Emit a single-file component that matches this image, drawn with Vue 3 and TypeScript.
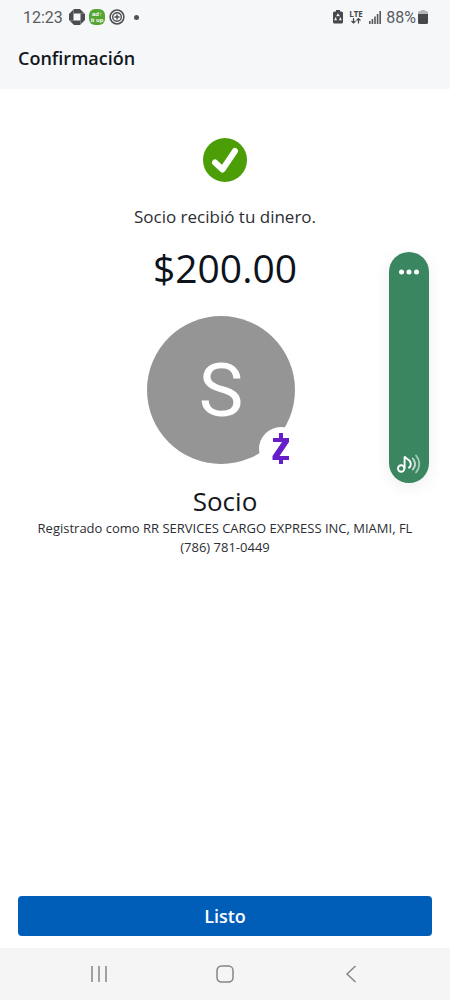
<script setup lang="ts">
interface Payment {
  recipient: string
  amount: string
  registeredAs: string
  phone: string
}

const payment: Payment = {
  recipient: 'Socio',
  amount: '$200.00',
  registeredAs: 'RR SERVICES CARGO EXPRESS INC, MIAMI, FL',
  phone: '(786) 781-0449',
}
</script>

<template>
  <div class="screen">
    <header class="top">
      <div class="status">
        <div class="status-group">
          <span class="clock">12:23</span>
          <svg class="app-icon" viewBox="0 0 16 16" aria-hidden="true">
            <path d="M5 0h6l5 5v6l-5 5H5l-5-5V5z" fill="#4b4d50" />
            <path d="M4.500 4.500h7v7h-7z" fill="#f5f7f9" />
            <path d="M4.500 0v4.500M16 4.500h-4.500M11.500 16v-4.500M0 11.500h4.500" stroke="#a5a7a9" stroke-width="0.500" />
          </svg>
          <svg class="app-icon" viewBox="0 0 16 16" aria-hidden="true">
            <rect width="16" height="16" rx="6" fill="#55a532" />
            <text x="8" y="7" class="mini">ad↑</text>
            <text x="8" y="13" class="mini">it up</text>
          </svg>
          <svg class="app-icon" viewBox="0 0 16 16" fill="none" stroke="#4b4d50" aria-hidden="true">
            <circle cx="8" cy="8" r="6.900" stroke-width="1.500" />
            <circle cx="8" cy="8" r="4.300" stroke-width="1.400" />
            <path d="M8 5.500v5M5.500 8h5" stroke-width="1.400" />
          </svg>
          <span class="dot"></span>
        </div>
        <div class="status-group right">
          <svg width="10" height="15" viewBox="0 0 10 15" aria-hidden="true">
            <path d="M3 0h4v1.500h1.500q1.500 0 1.500 1.500v9q0 1.500-1.500 1.500h-7Q0 13.500 0 12V3q0-1.500 1.500-1.500H3z" fill="#46484b" />
            <path d="M3.700 6.200L5 4.300l1.300 1.900M7 7.500l1 2.200H6M4 9.800H2l1-2.300" fill="none" stroke="#f5f7f9" stroke-width="1.100" />
          </svg>
          <svg width="16" height="18" viewBox="0 0 16 18" aria-hidden="true">
            <text x="8" y="9" class="lte">LTE</text>
            <path d="M5.500 10v5M3.500 13l2 2 2-2M10.500 15.500v-5M8.500 12.500l2-2 2 2" fill="none" stroke="#46484b" stroke-width="1.200" />
          </svg>
          <svg width="12" height="13" viewBox="0 0 12 13" fill="#55585b" aria-hidden="true">
            <path d="M0 10h1.600v3H0zM2.600 8h1.600v5H2.600zM5.200 5.500h1.600V13H5.200zM7.800 3h1.600v10H7.800zM10.400 0H12v13h-1.600z" />
          </svg>
          <span class="percent">88%</span>
          <svg width="10" height="14" viewBox="0 0 10 14" aria-hidden="true">
            <path d="M3 0h4v1h1.500Q10 1 10 2.500V5H0V2.500Q0 1 1.500 1H3z" fill="#b4b6b8" />
            <path d="M0 4h10v8.500q0 1.500-1.500 1.500h-7Q0 14 0 12.500z" fill="#46484b" />
          </svg>
        </div>
      </div>
      <h1 class="title">Confirmación</h1>
    </header>

    <main class="content">
      <svg class="check" viewBox="0 0 44 44" role="img" aria-label="Completado">
        <circle cx="22" cy="22" r="22" fill="#4b9e06" />
        <path d="M12 24.500l7.500 7L32 13" fill="none" stroke="#fff" stroke-width="6" stroke-linecap="round" stroke-linejoin="round" />
      </svg>
      <p class="message">{{ payment.recipient }} recibió tu dinero.</p>
      <p class="amount">{{ payment.amount }}</p>
      <div class="avatar-wrap">
        <div class="avatar">{{ payment.recipient.charAt(0) }}</div>
        <div class="badge">
          <svg width="18" height="32" viewBox="0 0 18 32" role="img" aria-label="Zelle">
            <path d="M7 0h4v5h6v4L7.500 23H17v4h-6v4H7v-4H.5v-4L10 9H1V5h6z" fill="#651ec8" />
          </svg>
        </div>
      </div>
      <h2 class="name">{{ payment.recipient }}</h2>
      <p class="detail">Registrado como {{ payment.registeredAs }}</p>
      <p class="detail">{{ payment.phone }}</p>
    </main>

    <div class="action">
      <button type="button" class="done">Listo</button>
    </div>

    <nav class="system-nav">
      <button type="button" aria-label="Recientes">
        <svg width="18" height="18" viewBox="0 0 18 18" fill="none" stroke="#858585" stroke-width="1.500">
          <path d="M2 1v16M9 1v16M16 1v16" />
        </svg>
      </button>
      <button type="button" aria-label="Inicio">
        <svg width="18" height="18" viewBox="0 0 18 18" fill="none" stroke="#858585" stroke-width="1.500">
          <rect x="1" y="1" width="16" height="16" rx="4.500" />
        </svg>
      </button>
      <button type="button" aria-label="Atrás">
        <svg width="18" height="18" viewBox="0 0 18 18" fill="none" stroke="#858585" stroke-width="1.500">
          <path d="M13.500 1L5 9l8.500 8" />
        </svg>
      </button>
    </nav>

    <div class="volume">
      <button type="button" aria-label="Más opciones">
        <svg width="20" height="6" viewBox="0 0 20 6" fill="#fff">
          <circle cx="2.500" cy="3" r="2.500" />
          <circle cx="10" cy="3" r="2.500" />
          <circle cx="17.500" cy="3" r="2.500" />
        </svg>
      </button>
      <button type="button" aria-label="Sonido multimedia">
        <svg width="24" height="20" viewBox="0 0 24 20" fill="none" stroke="#fff" stroke-linecap="round">
          <circle cx="4.200" cy="14.500" r="3.200" stroke-width="1.900" />
          <path d="M7.600 14V2.500C9 5.500 13.800 5 13.800 10c0 1.700-.7 3-1.800 3.800" stroke-width="1.900" />
          <path d="M15.800 4.500c3 3.500 3 7.500 0 11" stroke-width="1.900" opacity="0.700" />
          <path d="M19 1.500c4.300 5 4.300 12 0 17" stroke-width="1.800" opacity="0.550" />
        </svg>
      </button>
    </div>
  </div>
</template>

<style>
body {
  margin: 0;
  background: #fff;
}
</style>

<style scoped>
.screen {
  position: relative;
  display: flex;
  flex-direction: column;
  min-height: 100vh;
  background: #fff;
  color: #2b2e33;
  font-family: "Open Sans", "Noto Sans", sans-serif;
}

h1,
h2,
p {
  margin: 0;
}

button {
  padding: 0;
  border: 0;
  background: none;
  font: inherit;
  cursor: pointer;
}

svg {
  display: block;
  flex: none;
}

.top {
  padding-bottom: 19px;
  background: #f5f7f9;
}

.status {
  display: flex;
  justify-content: space-between;
  align-items: center;
  height: 34px;
  padding: 0 22px 0 23px;
  color: #5a5c5f;
  font-family: Roboto, sans-serif;
  font-size: 16px;
}

.status-group {
  display: flex;
  align-items: center;
  gap: 4px;
}

.clock {
  margin-right: 2px;
}

.app-icon {
  width: 16px;
  height: 16px;
}

.mini {
  fill: #fff;
  font: 700 6px "Liberation Sans", sans-serif;
  text-anchor: middle;
}

.dot {
  width: 5px;
  height: 5px;
  margin-left: 5px;
  border-radius: 50%;
  background: #505255;
}

.right {
  gap: 5px;
}

.lte {
  fill: #46484b;
  font: 700 8px "Open Sans", sans-serif;
  text-anchor: middle;
}

.percent {
  margin-right: -3px;
}

.title {
  padding: 0 18px;
  margin-top: 12px;
  color: #14171c;
  font-size: 18px;
  font-weight: 600;
  line-height: 24px;
}

.content {
  display: flex;
  flex: 1;
  flex-direction: column;
  align-items: center;
  padding: 49px 18px 24px;
  text-align: center;
}

.check {
  width: 44px;
  height: 44px;
}

.message {
  margin-top: 23px;
  font-size: 17px;
  line-height: 24px;
}

.amount {
  margin-top: 11px;
  color: #0e131b;
  font-size: 39px;
  line-height: 56px;
}

.avatar-wrap {
  position: relative;
  width: 156px;
  margin-top: 20px;
}

.avatar {
  display: flex;
  align-items: center;
  justify-content: center;
  width: 148px;
  height: 148px;
  border-radius: 50%;
  background: #959595;
  color: #fff;
  font-family: Roboto, sans-serif;
  font-size: 75px;
}

.badge {
  position: absolute;
  right: 0;
  bottom: -7px;
  display: flex;
  align-items: center;
  justify-content: center;
  width: 44px;
  height: 44px;
  border-radius: 50%;
  background: #fff;
}

.name {
  margin-top: 20px;
  color: #14171c;
  font-size: 26px;
  font-weight: 400;
  line-height: 35px;
}

.detail {
  font-size: 13px;
  line-height: 19px;
}

.action {
  padding: 0 18px 12px;
}

.done {
  width: 100%;
  height: 40px;
  border-radius: 4px;
  background: #005eb8;
  color: #fff;
  font-size: 18px;
  font-weight: 600;
}

.system-nav {
  display: flex;
  justify-content: center;
  gap: 24%;
  height: 52px;
  background: #f5f5f5;
}

.volume {
  position: absolute;
  top: 252px;
  right: 21px;
  display: flex;
  flex-direction: column;
  align-items: center;
  justify-content: space-between;
  box-sizing: border-box;
  width: 40px;
  height: 231px;
  padding: 17px 0 9px;
  border-radius: 20px;
  background: #3a8661;
  box-shadow: 0 4px 16px rgba(0, 0, 0, 0.07);
}
</style>
